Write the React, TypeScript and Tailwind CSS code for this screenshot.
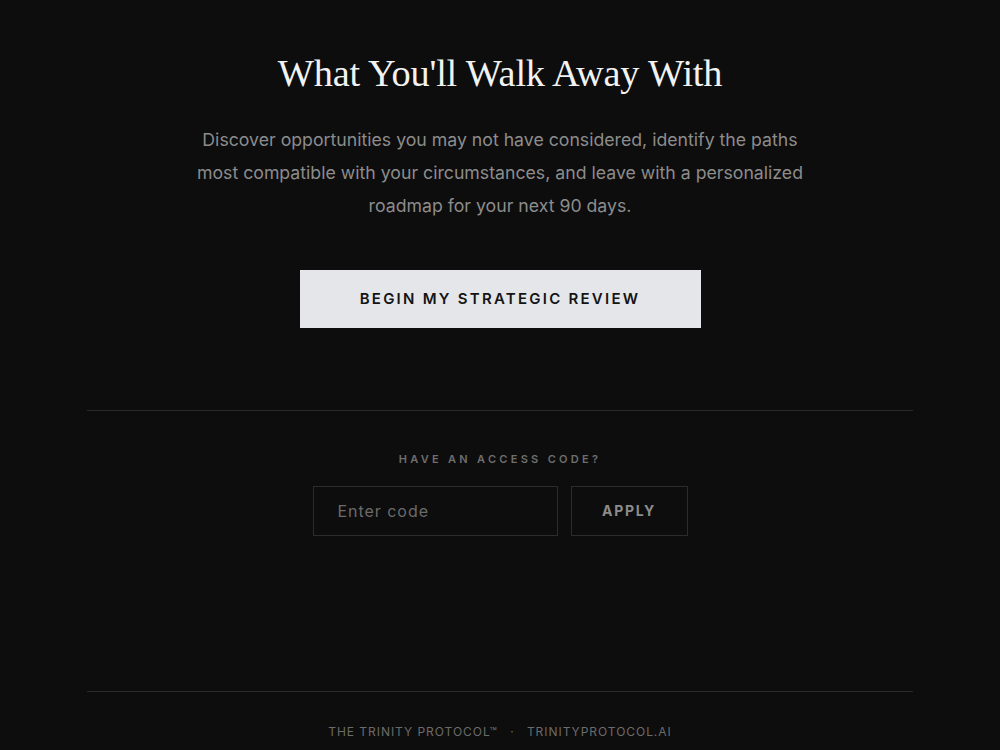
export default function App() {
  return (
    <div className="min-h-[750px] w-full bg-[#0d0d0d] flex flex-col items-center" style={{ fontFamily: "Inter, 'Liberation Sans', sans-serif" }}>
      <div className="w-[826px] flex flex-col items-center">
        <h1 className="mt-[51px] text-[38.3px] leading-[44px] text-[#f2f2f2] tracking-[-0.005em]" style={{ fontFamily: "'Liberation Serif', 'DejaVu Serif', serif" }}>
          What You'll Walk Away With
        </h1>
        <p className="mt-[28px] w-[620px] text-center text-[17.7px] leading-[33px] text-[#8c8c8c]">
          Discover opportunities you may not have considered, identify the paths most compatible with your circumstances, and leave with a personalized roadmap for your next 90 days.
        </p>
        <button className="mt-[48px] w-[401px] h-[58px] bg-[#e5e6ea] text-[#141414] text-[15px] font-semibold tracking-[0.15em]">
          BEGIN MY STRATEGIC REVIEW
        </button>
        <div className="mt-[82px] w-full h-px bg-[#2a2a2a]" />
        <div className="mt-[40px] text-[11px] font-semibold tracking-[0.3em] text-[#6e6e6e]">HAVE AN ACCESS CODE?</div>
        <div className="mt-[18px] flex gap-[13px]">
          <input
            placeholder="Enter code"
            className="w-[245px] h-[50px] bg-transparent border border-[#2c2c2c] px-[24px] text-[16px] tracking-[0.06em] text-[#ccc] placeholder:text-[#6b6b6b] outline-none"
          />
          <button className="w-[117px] h-[50px] border border-[#2c2c2c] text-[14px] font-bold tracking-[0.12em] text-[#8c8c8c]">
            APPLY
          </button>
        </div>
        <div className="mt-[155px] w-full h-px bg-[#2a2a2a]" />
        <div className="mt-[31px] text-[12px] tracking-[0.08em] text-[#6b6b6b]">
          THE TRINITY PROTOCOL™ <span className="mx-[8px]">·</span> TRINITYPROTOCOL.AI
        </div>
      </div>
    </div>
  );
}
